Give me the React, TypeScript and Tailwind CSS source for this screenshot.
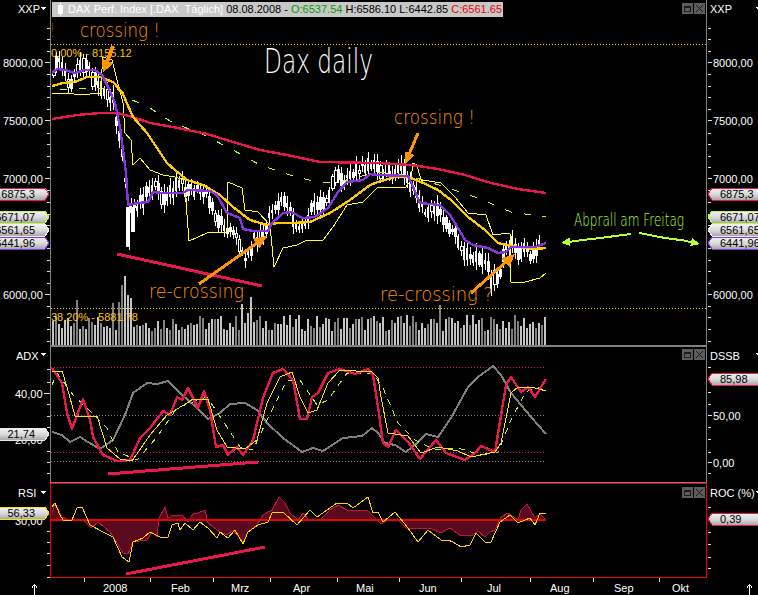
import { ReactNode } from 'react';

type Pt = [number, number];

const purple: Pt[] = [[52,73],[57,69],[65,70],[75,73],[85,70],[95,70],[102,75],[108,87],[115,103],[120,127],[123,150],[126,173],[128,205],[138,203],[148,202],[153,192],[163,193],[183,193],[188,190],[210,191],[217,195],[227,213],[240,218],[243,229],[253,231],[268,231],[272,223],[283,213],[292,212],[302,218],[315,217],[328,208],[338,192],[347,182],[363,180],[370,174],[378,175],[408,176],[413,187],[420,203],[440,205],[450,215],[458,228],[465,240],[473,245],[488,248],[498,253],[506,252],[511,247],[535,247],[546,243]];
const gold: Pt[] = [[52,86],[63,83],[75,82],[87,77],[100,77],[113,82],[122,92],[133,117],[147,133],[167,163],[175,170],[187,180],[203,185],[220,195],[233,207],[250,220],[267,225],[277,223],[293,223],[310,222],[330,213],[350,200],[370,185],[378,182],[395,177],[408,177],[421,182],[438,190],[451,200],[468,217],[485,230],[498,243],[511,246],[535,249],[546,248]];
const crimson: Pt[] = [[52,119],[77,115],[100,113],[117,113],[133,117],[150,123],[173,127],[207,134],[233,142],[260,150],[287,155],[320,162],[378,163],[411,165],[438,169],[465,175],[491,183],[518,189],[546,193]];
const limeDash: Pt[] = [[60,90],[77,89],[100,88],[117,89],[130,99],[150,108],[173,123],[200,133],[233,150],[260,165],[290,175],[317,182],[337,183],[353,178],[380,172],[410,176],[445,187],[478,198],[511,212],[546,217]];
const bandHi: Pt[] = [[52,94],[67,93],[80,95],[100,93],[103,57],[112,60],[117,80],[123,103],[125,133],[131,140],[133,165],[140,158],[150,170],[163,175],[175,177],[185,180],[187,215],[189,241],[207,233],[227,232],[228,182],[242,188],[245,210],[258,212],[270,225],[274,267],[283,248],[297,245],[307,240],[323,240],[333,227],[347,205],[363,202],[378,187],[395,187],[406,187],[411,180],[413,163],[417,165],[421,180],[423,180],[441,183],[455,197],[468,213],[486,215],[493,235],[510,233],[511,282],[525,282],[540,278],[546,273]];

const adxGray: Pt[] = [[52,432],[62,435],[70,442],[80,437],[88,442],[100,449],[113,440],[125,415],[133,393],[147,383],[157,384],[168,381],[180,393],[197,408],[208,419],[220,413],[230,404],[245,403],[257,410],[267,423],[283,438],[302,452],[313,448],[323,451],[343,438],[362,436],[372,428],[378,433],[385,443],[395,445],[406,452],[418,442],[426,434],[438,437],[451,418],[468,387],[478,377],[493,366],[501,375],[511,393],[531,417],[546,434]];
const adxRed: Pt[] = [[52,368],[62,383],[67,413],[72,429],[83,399],[90,420],[93,437],[103,455],[117,461],[130,460],[140,438],[150,428],[163,411],[170,415],[177,397],[182,400],[188,388],[198,408],[204,391],[210,410],[216,447],[223,445],[228,455],[237,447],[243,455],[253,440],[263,398],[273,373],[283,369],[293,380],[300,419],[307,419],[312,397],[318,393],[328,373],[340,369],[355,374],[368,369],[373,375],[378,407],[383,443],[388,447],[396,430],[408,442],[420,459],[436,440],[446,453],[465,460],[475,453],[481,446],[495,452],[506,385],[511,377],[521,392],[528,387],[535,397],[546,379]];
const adxYellow: Pt[] = [[52,371],[62,371],[67,387],[75,416],[97,416],[107,448],[120,459],[132,461],[150,435],[167,415],[187,403],[193,399],[208,399],[217,430],[227,447],[245,449],[257,440],[267,403],[280,377],[292,372],[300,397],[308,413],[317,410],[328,383],[340,370],[372,372],[378,378],[381,397],[388,433],[408,436],[421,453],[438,447],[458,451],[471,457],[495,452],[501,443],[511,393],[518,387],[535,388],[546,391]];
const adxLime: Pt[] = [[52,385],[57,373],[73,395],[87,408],[107,428],[118,452],[137,460],[157,437],[177,408],[207,397],[227,427],[240,447],[253,450],[267,420],[287,380],[300,380],[317,405],[328,400],[347,373],[373,373],[383,388],[398,423],[415,440],[435,450],[458,448],[481,455],[498,452],[511,420],[525,393],[535,387],[546,390]];

const rsiArea: Pt[] = [[52,513],[55,503],[62,517],[70,520],[83,520],[91,528],[98,522],[110,532],[115,540],[123,553],[128,554],[133,542],[147,540],[152,532],[157,537],[159,518],[165,507],[168,518],[173,515],[182,515],[188,522],[193,514],[198,513],[205,510],[208,523],[220,532],[227,535],[233,530],[243,542],[248,532],[257,525],[263,515],[272,510],[279,497],[285,503],[290,513],[298,520],[303,513],[308,519],[320,520],[330,510],[338,505],[347,510],[367,510],[375,518],[381,524],[388,520],[398,520],[406,528],[418,528],[430,528],[441,533],[450,528],[461,536],[473,535],[478,531],[485,537],[490,532],[495,530],[501,517],[508,513],[518,520],[521,510],[527,504],[535,518],[540,514],[546,520]];
const rsiLine: Pt[] = [[52,507],[55,503],[60,515],[63,520],[72,520],[77,508],[82,507],[90,525],[103,532],[113,537],[122,557],[129,562],[133,542],[143,538],[150,532],[160,537],[168,537],[172,525],[178,523],[180,530],[185,523],[193,530],[200,522],[208,528],[217,538],[220,532],[228,538],[235,530],[243,544],[248,532],[258,525],[268,522],[272,513],[283,512],[297,525],[310,510],[317,517],[337,503],[347,503],[353,508],[368,497],[373,513],[378,512],[383,522],[395,512],[408,528],[418,542],[428,530],[441,540],[448,540],[453,542],[461,547],[470,545],[476,533],[485,542],[491,542],[500,522],[510,515],[518,523],[530,518],[535,525],[540,513],[546,514]];

const pricePath: Pt[] = [[52,70],[60,62],[68,82],[75,72],[83,60],[90,78],[97,85],[103,90],[108,97],[112,102],[116,125],[120,140],[124,180],[127,218],[130,212],[135,205],[143,195],[150,185],[155,190],[165,198],[172,192],[178,183],[185,188],[195,190],[205,195],[212,210],[218,222],[225,225],[232,235],[240,245],[245,262],[252,240],[258,236],[265,230],[270,210],[278,205],[285,200],[295,225],[303,228],[312,205],[320,204],[328,195],[335,175],[343,178],[352,172],[360,170],[368,158],[372,165],[380,175],[388,172],[396,168],[404,175],[410,185],[415,195],[420,205],[425,215],[432,207],[438,212],[443,225],[450,232],[456,235],[462,255],[470,258],[478,255],[485,262],[490,278],[495,285],[500,265],[505,250],[510,240],[515,250],[520,255],[525,245],[530,255],[535,250],[540,238],[546,232]];

const volumePeaks: Record<number, number> = { 76: 45, 112: 42, 118: 43, 121: 60, 124: 69, 127: 50, 130: 47, 241: 41, 247: 32, 250: 48, 439: 40, 406: 30 };

const points = (p: Pt[]) => p.map(([x, y]) => `${x},${y}`).join(' ');

const noise = (i: number) => {
    const v = Math.sin(i * 12.9898) * 43758.5453;
    return v - Math.floor(v);
};

const priceAt = (x: number) => {
    for (let i = 1; i < pricePath.length; i++) {
        const [x0, y0] = pricePath[i - 1];
        const [x1, y1] = pricePath[i];
        if (x <= x1) return y0 + ((y1 - y0) * (x - x0)) / (x1 - x0);
    }
    return pricePath[pricePath.length - 1][1];
};

const Line = ({ p, color, w = 1, dash }: { p: Pt[]; color: string; w?: number; dash?: string }) => (
    <polyline points={points(p)} fill="none" stroke={color} strokeWidth={w} strokeDasharray={dash} strokeLinejoin="round" />
);

const Arrow = ({ x1, y1, x2, y2, color, w = 3, head = 9 }: { x1: number; y1: number; x2: number; y2: number; color: string; w?: number; head?: number }) => {
    const a = Math.atan2(y2 - y1, x2 - x1);
    const bx = x2 - Math.cos(a) * head * 1.3;
    const by = y2 - Math.sin(a) * head * 1.3;
    const nx = -Math.sin(a) * head * 0.6;
    const ny = Math.cos(a) * head * 0.6;
    return (
        <g>
            <line x1={x1} y1={y1} x2={bx} y2={by} stroke={color} strokeWidth={w} />
            <polygon points={`${x2},${y2} ${bx + nx},${by + ny} ${bx - nx},${by - ny}`} fill={color} />
        </g>
    );
};

const Note = ({ x, y, w, h = 22, cls, children }: { x: number; y: number; w: number; h?: number; cls: string; children: ReactNode }) => (
    <text x={x} y={y} textLength={w} lengthAdjust="spacingAndGlyphs" className={`font-['DejaVu_Sans',sans-serif] font-extralight ${cls}`} style={{ fontSize: h }}>
        {children}
    </text>
);

const Candles = () => {
    const bars = [];
    for (let i = 0; i < 163; i++) {
        const x = 52 + i * 3;
        const mid = priceAt(x) + (noise(i + 150) - 0.5) * 10;
        const h = 3 + noise(i) * 11;
        const wick = 2 + noise(i + 300) * 6;
        const wide = noise(i + 500) > 0.5;
        const hollow = noise(i + 700) > 0.85;
        bars.push(
            <g key={i}>
                <line x1={x + 1.5} x2={x + 1.5} y1={mid - h / 2 - wick} y2={mid + h / 2 + wick} stroke="#fff" />
                <rect x={x} y={mid - h / 2} width={wide ? 3 : 2} height={h} fill={hollow ? '#000' : '#fff'} stroke={hollow ? '#fff' : 'none'} />
            </g>
        );
    }
    return (
        <g>
            {bars}
            <rect x={126} y={207} width={3} height={40} fill="#fff" />
            <rect x={131} y={207} width={4} height={25} fill="#fff" />
            <line x1={129} x2={129} y1={205} y2={250} stroke="#fff" />
        </g>
    );
};

const Volume = () => {
    const bars = [];
    for (let i = 0; i < 165; i++) {
        const x = 52 + i * 3;
        const h = volumePeaks[x] ?? 14 + noise(i + 40) * 16;
        bars.push(<rect key={i} x={x} y={345 - h} width={2} height={h} fill={noise(i + 90) > 0.45 ? '#c4c4c4' : '#808080'} />);
    }
    return <g>{bars}</g>;
};

const WindowButtons = ({ cls }: { cls: string }) => (
    <div className={`absolute right-[1px] flex gap-[1px] ${cls}`}>
        <div className="w-[11px] h-[11px] bg-[#5c5c5c] flex items-center justify-center">
            <div className="w-[7px] h-[6px] border border-t-2 border-[#1c1c1c]" />
        </div>
        <div className="w-[11px] h-[11px] bg-[#5c5c5c]">
            <svg viewBox="0 0 11 11" className="w-[11px] h-[11px]" shapeRendering="crispEdges">
                <path d="M2 2 L9 9 M9 2 L2 9" stroke="#1c1c1c" strokeWidth="1.2" />
            </svg>
        </div>
    </div>
);

const Tag = ({ side, y, h = 12, color, value }: { side: 'l' | 'r'; y: number; h?: number; color: string; value: string }) => {
    const mid = y + h / 2;
    const shape =
        side === 'l'
            ? `-5,${y} 45,${y} 49,${mid} 45,${y + h} -5,${y + h}`
            : `708,${mid} 712,${y} 765,${y} 765,${y + h} 712,${y + h}`;
    return (
        <g>
            <polygon points={shape} fill="url(#tagFill)" stroke={color} />
            <text x={side === 'l' ? 35 : 720} y={y + 10} textAnchor={side === 'l' ? 'end' : 'start'} className="fill-black text-[11px]">
                {value}
            </text>
        </g>
    );
};

const Label = ({ x, y, children, end }: { x: number; y: number; children: ReactNode; end?: boolean }) => (
    <text x={x} y={y} textAnchor={end ? 'end' : 'start'} className="fill-white text-[11px]">
        {children}
    </text>
);

const Ticks = ({ x, ys, len = 3 }: { x: number; ys: number[]; len?: number }) => (
    <g>
        {ys.map((y) => (
            <line key={y} x1={x} x2={x + len} y1={y + 0.5} y2={y + 0.5} stroke="#ddd" />
        ))}
    </g>
);

const Caret = ({ x, y }: { x: number; y: number }) => <polygon points={`${x},${y} ${x + 6},${y} ${x + 3},${y + 3}`} fill="#fff" />;

const TagFill = () => (
    <defs>
        <linearGradient id="tagFill" x1="0" y1="0" x2="0" y2="1">
            <stop offset="0" stopColor="#f4f4f4" />
            <stop offset="0.55" stopColor="#d8d8d8" />
            <stop offset="1" stopColor="#a8a8a8" />
        </linearGradient>
    </defs>
);

const Axis = ({ x, y, h, children }: { x: number; y: number; h: number; children: ReactNode }) => {
    const w = x === 0 ? 50 : 51;
    return (
        <svg width={w} height={h} viewBox={`${x} ${y} ${w} ${h}`} className="block shrink-0" shapeRendering="crispEdges">
            {children}
        </svg>
    );
};

export default function App() {
    return (
        <div className="w-[758px] h-[595px] bg-black overflow-hidden flex flex-col font-['Liberation_Sans',Arial,sans-serif] select-none">
            {/* main pane */}
            <div className="flex h-[347px]">
                <Axis x={0} y={0} h={347}>
                    <TagFill />
                    <text x={18} y={13} className="fill-white text-[11px]">XXP</text>
                    <Caret x={40} y={7} />
                    <Ticks x={47} ys={[28, 39, 51, 74, 86, 97, 109, 133, 144, 156, 167, 190, 202, 214, 225, 248, 260, 271, 283, 306, 317, 329, 341]} />
                    <Ticks x={45} ys={[62, 120, 178, 294]} len={5} />
                    <Label x={3} y={67}>8000,00</Label>
                    <Label x={3} y={125}>7500,00</Label>
                    <Label x={3} y={183}>7000,00</Label>
                    <Label x={3} y={299}>6000,00</Label>
                    <Tag side="l" y={188} color="#e8194a" value="6875,3" />
                    <Tag side="l" y={211} color="#b4ff32" value="6671,07" />
                    <Tag side="l" y={224} color="#f0f0f0" value="6561,65" />
                    <Tag side="l" y={237} color="#8a32e0" value="6441,96" />
                </Axis>

                <div className="relative w-[657px] border-x border-b-2 border-[#808080]">
                    <svg width={655} height={345} viewBox="51 0 655 345" className="block" shapeRendering="crispEdges">
                        <line x1={51} x2={706} y1={44.5} y2={44.5} stroke="#ffd200" strokeDasharray="1 2" />
                        <line x1={51} x2={706} y1={308.5} y2={308.5} stroke="#ffd200" strokeDasharray="1 2" />
                        <Volume />
                        <Candles />
                        <Line p={bandHi} color="#ffff1e" />
                        <Line p={limeDash} color="#b4ff32" dash="7 12" />
                        <Line p={crimson} color="#e8194a" w={2.4} />
                        <Line p={gold} color="#ffc800" w={2.4} />
                        <Line p={purple} color="#8a32e0" w={2.4} />
                        <text x={51} y={57} className="fill-[#ffc800] text-[11px]">0,00% - 8155.12</text>
                        <text x={51} y={321} className="fill-[#ffc800] text-[11px]">38,20% - 5881.78</text>
                        <Note x={51} y={37} w={3} h={20} cls="fill-[#ff9600]">!</Note>
                        <Note x={80} y={37} w={80} h={20} cls="fill-[#ff9600]">crossing !</Note>
                        <Note x={394} y={124} w={81} h={20} cls="fill-[#ff9600]">crossing !</Note>
                        <Note x={149} y={298} w={95} h={20} cls="fill-[#ff9600]">re-crossing</Note>
                        <Note x={380} y={301} w={113} h={20} cls="fill-[#ff9600]">re-crossing ?</Note>
                        <Note x={264} y={73} w={109} h={34} cls="fill-white">Dax daily</Note>
                        <Note x={574} y={226} w={110} h={17} cls="fill-[#b4ff32]">Abprall am Freitag</Note>
                        <line x1={117} y1={254} x2={262} y2={286} stroke="#e8194a" strokeWidth={3} />
                        <Arrow x1={113} y1={46} x2={103} y2={73} color="#ff9600" w={4} head={10} />
                        <Arrow x1={418} y1={133} x2={405} y2={164} color="#ff9600" w={3} head={9} />
                        <Arrow x1={199} y1={284} x2={267} y2={236} color="#ff9600" w={3} head={10} />
                        <Arrow x1={471} y1={293} x2={515} y2={254} color="#ff9600" w={3} head={10} />
                        <polyline points="631,234 600,238 575,241" fill="none" stroke="#b4ff32" strokeWidth={2} />
                        <Arrow x1={576} y1={241} x2={561} y2={243} color="#b4ff32" w={2} head={7} />
                        <polyline points="639,233 665,238 688,241" fill="none" stroke="#b4ff32" strokeWidth={2} />
                        <Arrow x1={686} y1={241} x2={700} y2={244} color="#b4ff32" w={2} head={7} />
                    </svg>
                    <div className="absolute left-[1px] top-[2px] w-[451px] h-[15px] bg-[#c8c8c8] flex items-center pl-[6px] text-[11px] leading-none whitespace-pre">
                        <span className="relative w-[5px] h-[9px] bg-white mr-[5px]">
                            <span className="absolute left-[2px] top-[-2px] w-[1px] h-[13px] bg-white" />
                        </span>
                        <span className="text-white">DAX Perf. Index [.DAX  Täglich] </span>
                        <span className="text-black">08.08.2008 - </span>
                        <span className="text-[#00a000]">O:6537.54 </span>
                        <span className="text-black">H:6586.10 L:6442.85 </span>
                        <span className="text-[#f00000]">C:6561.65</span>
                    </div>
                    <WindowButtons cls="top-[3px]" />
                </div>

                <Axis x={707} y={0} h={347}>
                    <TagFill />
                    <text x={710} y={13} className="fill-white text-[11px]">XXP</text>
                    <Caret x={755} y={7} />
                    <Ticks x={708} ys={[28, 39, 51, 74, 86, 97, 109, 133, 144, 156, 167, 190, 202, 214, 225, 248, 260, 271, 283, 306, 317, 329, 341]} />
                    <Ticks x={708} ys={[62, 120, 178, 294]} len={4} />
                    <Label x={713} y={67}>8000,00</Label>
                    <Label x={713} y={125}>7500,00</Label>
                    <Label x={713} y={183}>7000,00</Label>
                    <Label x={713} y={299}>6000,00</Label>
                    <Tag side="r" y={188} color="#e8194a" value="6875,3" />
                    <Tag side="r" y={211} color="#b4ff32" value="6671,07" />
                    <Tag side="r" y={224} color="#f0f0f0" value="6561,65" />
                    <Tag side="r" y={237} color="#8a32e0" value="6441,96" />
                </Axis>
            </div>

            {/* ADX / DSSB pane */}
            <div className="flex h-[136px]">
                <Axis x={0} y={347} h={136}>
                    <TagFill />
                    <text x={16} y={360} className="fill-white text-[11px]">ADX</text>
                    <Caret x={40} y={353} />
                    <Ticks x={47} ys={[369, 382, 404, 416, 427, 451, 462, 473]} />
                    <Ticks x={44} ys={[393]} len={6} />
                    <Label x={15} y={398}>40,00</Label>
                    <Label x={15} y={444}>20,00</Label>
                    <Tag side="l" y={428} color="#e8e8e8" value="21,74" />
                </Axis>

                <div className="relative w-[657px] border-x border-b border-[#808080]">
                    <svg width={655} height={135} viewBox="51 347 655 135" className="block" shapeRendering="crispEdges">
                        <line x1={51} x2={546} y1={367.5} y2={367.5} stroke="#e8194a" strokeDasharray="1 2" />
                        <line x1={51} x2={546} y1={452.5} y2={452.5} stroke="#e8194a" strokeDasharray="1 2" />
                        <line x1={51} x2={546} y1={415.5} y2={415.5} stroke="#808080" strokeDasharray="1 2" />
                        <line x1={51} x2={546} y1={461.5} y2={461.5} stroke="#808080" strokeDasharray="1 2" />
                        <Line p={adxGray} color="#808080" w={2} />
                        <Line p={adxLime} color="#b4ff32" dash="6 6" />
                        <Line p={adxRed} color="#e8194a" w={2.4} />
                        <Line p={adxYellow} color="#ffe000" />
                        <line x1={108} y1={474} x2={258} y2={462} stroke="#e8194a" strokeWidth={3} />
                    </svg>
                    <WindowButtons cls="top-[2px]" />
                </div>

                <Axis x={707} y={347} h={136}>
                    <TagFill />
                    <text x={710} y={360} className="fill-white text-[11px]">DSSB</text>
                    <Caret x={755} y={353} />
                    <Ticks x={708} ys={[367, 379, 392, 404, 427, 439, 452, 473]} />
                    <Ticks x={708} ys={[415, 462]} len={4} />
                    <Label x={713} y={420}>50,00</Label>
                    <Label x={713} y={467}>0,00</Label>
                    <Tag side="r" y={373} color="#e8194a" value="85,98" />
                </Axis>
            </div>

            {/* RSI / ROC pane */}
            <div className="flex h-[95px]">
                <Axis x={0} y={483} h={95}>
                    <TagFill />
                    <text x={18} y={497} className="fill-white text-[11px]">RSI</text>
                    <Caret x={40} y={491} />
                    <Ticks x={47} ys={[531, 542, 553, 565, 577]} />
                    <Label x={15} y={525}>30,00</Label>
                    <Tag side="l" y={507} color="#ffe000" value="56,33" />
                </Axis>

                <div className="relative w-[657px] border border-[#f00000]">
                    <svg width={655} height={93} viewBox="51 484 655 93" className="block" shapeRendering="crispEdges">
                        <polygon points={`52,520 ${points(rsiArea)} 546,520`} fill="#5a0a1e" />
                        <Line p={rsiArea} color="#c8143c" />
                        <line x1={51} x2={546} y1={520} y2={520} stroke="#f00000" strokeWidth={2} />
                        <Line p={rsiLine} color="#ffd200" />
                        <line x1={126} y1={574} x2={265} y2={547} stroke="#e8194a" strokeWidth={3} />
                    </svg>
                    <WindowButtons cls="top-[3px]" />
                </div>

                <Axis x={707} y={483} h={95}>
                    <TagFill />
                    <text x={710} y={497} className="fill-white text-[11px]">ROC (%)</text>
                    <Caret x={755} y={491} />
                    <Ticks x={708} ys={[507, 532, 544, 557, 568]} />
                    <Tag side="r" y={513} color="#e8194a" value="0,39" />
                </Axis>
            </div>

            {/* time axis */}
            <svg width={758} height={17} viewBox="0 578 758 17" className="block" shapeRendering="crispEdges">
                {[84, 150, 213, 270, 337, 399, 461, 530, 593, 659].map((x) => (
                    <line key={x} x1={x + 0.5} x2={x + 0.5} y1={578} y2={582} stroke="#ddd" />
                ))}
                {[
                    ['2008', 103],
                    ['Feb', 171],
                    ['Mrz', 231],
                    ['Apr', 293],
                    ['Mai', 356],
                    ['Jun', 419],
                    ['Jul', 487],
                    ['Aug', 550],
                    ['Sep', 614],
                    ['Okt', 672],
                ].map(([t, x]) => (
                    <text key={t} x={x} y={592} className="fill-white text-[11px]">
                        {t}
                    </text>
                ))}
                <path d="M34.5 595 V585 M32 587.5 L34.5 584.5 L37 587.5 M749.5 595 V585 M747 587.5 L749.5 584.5 L752 587.5" stroke="#fff" fill="none" />
            </svg>
        </div>
    );
}
